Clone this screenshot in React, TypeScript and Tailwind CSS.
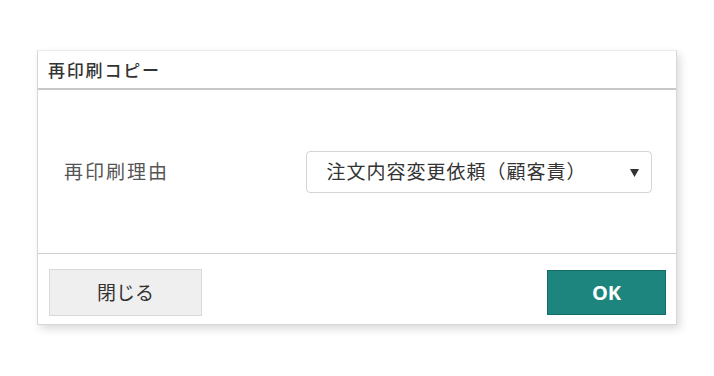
const jp = { fontFamily: '"Noto Sans CJK JP", "Noto Sans", sans-serif' }

export default function App() {
    return (
        <div className="w-[714px] h-[376px] bg-white overflow-hidden" style={jp}>
            <div className="ml-[37px] mt-[50px] w-[640px] h-[275px] flex flex-col bg-white border border-[#d6d6d6] border-t-[#ececec] shadow-[3px_4px_8px_rgba(0,0,0,0.14)]">
                {/* header */}
                <div className="h-[39px] flex items-center pl-[10px] border-b-2 border-[#c8c8c8]">
                    <span className="text-[17px] tracking-[1.8px] text-[#333] font-medium">再印刷コピー</span>
                </div>

                {/* body */}
                <div className="flex-1 flex items-center pl-[26px] pr-[24px]">
                    <span className="w-[242px] text-[19px] tracking-[2px] text-[#555]">再印刷理由</span>
                    <div className="w-[347px] h-[42px] flex items-center justify-between pl-[20px] pr-[12px] border border-[#d4d4d4] rounded-[4px]">
                        <span className="text-[19px] tracking-[1px] text-[#333]">注文内容変更依頼（顧客責）</span>
                        <svg width="9" height="9" viewBox="0 0 9 9" className="mt-[1px]">
                            <path d="M0 1 L9 1 L4.5 9 Z" fill="#333" />
                        </svg>
                    </div>
                </div>

                {/* footer */}
                <div className="h-[71px] flex items-center justify-between pl-[11px] pr-[10px] pt-[7px] border-t border-[#cfcfcf]">
                    <button className="w-[153px] h-[47px] bg-[#efefef] border border-[#d9d9d9] text-[19px] text-[#333]">
                        閉じる
                    </button>
                    <button
                        className="w-[119px] h-[45px] bg-[#1d857e] border border-[#156b65] text-white text-[20px] font-bold"
                        style={{ fontFamily: '"Open Sans", sans-serif' }}
                    >
                        OK
                    </button>
                </div>
            </div>
        </div>
    )
}
